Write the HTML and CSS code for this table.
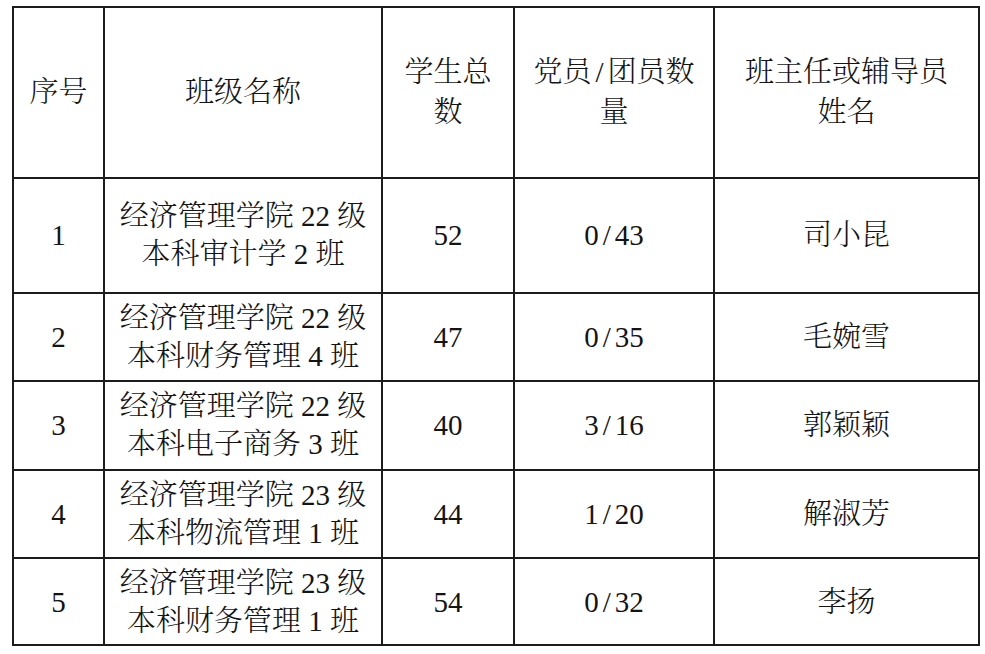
FILE: index.html
```html
<!DOCTYPE html>
<html lang="zh-CN">
<head>
<meta charset="utf-8">
<title>班级名单</title>
<link rel="stylesheet" href="styles.css">
</head>
<body>
<table class="roster">
  <colgroup>
    <col class="c-no">
    <col class="c-name">
    <col class="c-total">
    <col class="c-party">
    <col class="c-teacher">
  </colgroup>
  <thead>
    <tr class="head">
      <th>序号</th>
      <th>班级名称</th>
      <th>学生总<br>数</th>
      <th>党员<span class="sl">/</span>团员数<br>量</th>
      <th>班主任或辅导员<br>姓名</th>
    </tr>
  </thead>
  <tbody>
    <tr class="r1">
      <td>1</td>
      <td>经济管理学院 22 级<br>本科审计学 2 班</td>
      <td>52</td>
      <td>0<span class="sl">/</span>43</td>
      <td>司小昆</td>
    </tr>
    <tr class="r">
      <td>2</td>
      <td>经济管理学院 22 级<br>本科财务管理 4 班</td>
      <td>47</td>
      <td>0<span class="sl">/</span>35</td>
      <td>毛婉雪</td>
    </tr>
    <tr class="r">
      <td>3</td>
      <td>经济管理学院 22 级<br>本科电子商务 3 班</td>
      <td>40</td>
      <td>3<span class="sl">/</span>16</td>
      <td>郭颖颖</td>
    </tr>
    <tr class="r">
      <td>4</td>
      <td>经济管理学院 23 级<br>本科物流管理 1 班</td>
      <td>44</td>
      <td>1<span class="sl">/</span>20</td>
      <td>解淑芳</td>
    </tr>
    <tr class="r last">
      <td>5</td>
      <td>经济管理学院 23 级<br>本科财务管理 1 班</td>
      <td>54</td>
      <td>0<span class="sl">/</span>32</td>
      <td>李扬</td>
    </tr>
  </tbody>
</table>
</body>
</html>
```

FILE: styles.css
```css
html, body {
  margin: 0;
  padding: 0;
  background: #ffffff;
}

body {
  padding: 6px 0 0 12px;
  font-family: "Liberation Serif", "Noto Serif CJK SC", "Noto Sans CJK SC", serif;
  color: #141414;
}

.roster {
  border-collapse: collapse;
  table-layout: fixed;
  width: 966px;
  font-size: 29px;
  letter-spacing: 0;
}

.c-no { width: 91px; }
.c-name { width: 278px; }
.c-total { width: 132px; }
.c-party { width: 200px; }
.c-teacher { width: 265px; }

.roster th,
.roster td {
  border: 2px solid #1c1c1c;
  text-align: center;
  vertical-align: middle;
  padding: 0;
  font-weight: 300;
  line-height: 38px;
  white-space: nowrap;
}

.roster th {
  line-height: 40px;
  padding-bottom: 2px;
}

.head th { height: 167px; }
.r1 td { height: 112.5px; }
.r td { height: 86.6px; }
.r.last td { height: 85px; }

.sl {
  display: inline-block;
  margin: 0 4px;
}
```
